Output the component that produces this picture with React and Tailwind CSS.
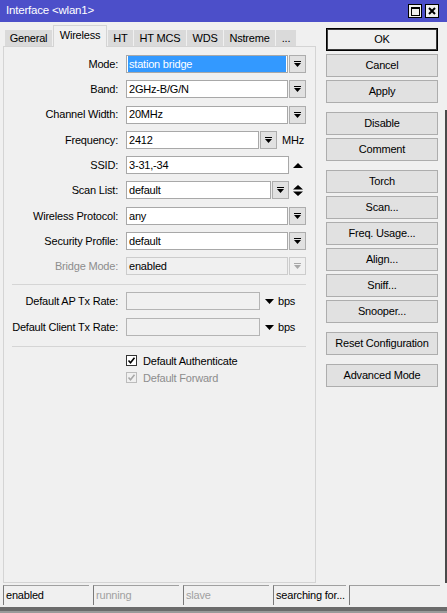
import React from "react";

const DropIcon = ({ color = "#000" }) => (
  <svg width="7" height="6" viewBox="0 0 7 6" fill={color}>
    <rect x="0" y="0" width="7" height="1" />
    <path d="M0 2h7L3.5 6z" />
  </svg>
);

const DropButton = ({ disabled }) => (
  <div
    className={
      disabled
        ? "ml-[1px] w-[17px] h-[18px] flex items-center justify-center border border-[#cccccc] bg-[#f0f0f0]"
        : "ml-[1px] w-[17px] h-[18px] flex items-center justify-center border border-[#adadad] bg-[#e1e1e1]"
    }
  >
    <DropIcon color={disabled ? "#a8a8a8" : "#000"} />
  </div>
);

const Field = ({ value, w, selected, disabled, empty }) => {
  let cls =
    "h-[18px] flex items-center px-[1px] border border-[#a8a8a8] bg-white whitespace-nowrap overflow-hidden";
  if (selected) cls = "h-[18px] flex items-center px-[1px] border border-[#a8a8a8] bg-white whitespace-nowrap overflow-hidden";
  if (disabled) cls = "h-[18px] flex items-center px-[1px] border border-[#cccccc] bg-[#f0f0f0] whitespace-nowrap overflow-hidden";
  if (empty) cls = "h-[18px] flex items-center px-[1px] border border-[#b4b4b4] bg-[#f0f0f0] whitespace-nowrap overflow-hidden";
  return (
    <div className={cls} style={{ width: w }}>
      {selected ? (
        <div className="h-full w-full bg-[#3399ff] text-white pl-[1px] flex items-center">{value}</div>
      ) : (
        <span className="pl-[1px]">{value}</span>
      )}
    </div>
  );
};

const Label = ({ children, muted }) => (
  <div className={muted ? "w-[114px] mr-[8px] text-right text-[#8d8d8d]" : "w-[114px] mr-[8px] text-right"}>
    {children}
  </div>
);

const Row = ({ children }) => <div className="flex items-center h-[18px]">{children}</div>;

const UpTri = () => (
  <svg width="10" height="5" viewBox="0 0 10 5" className="ml-[4px]">
    <path d="M0 5L5 0L10 5z" fill="#000" />
  </svg>
);

const UpDown = () => (
  <svg width="10" height="11" viewBox="0 0 10 11" className="ml-[4px]">
    <path d="M0 4.5L5 0L10 4.5z M0 6.5L5 11L10 6.5z" fill="#000" />
  </svg>
);

const DownTri = () => (
  <svg width="9" height="5" viewBox="0 0 9 5" className="ml-[5px]">
    <path d="M0 0L9 0L4.5 5z" fill="#000" />
  </svg>
);

const Check = ({ muted }) => (
  <div
    className={
      muted
        ? "w-[11px] h-[11px] border border-[#bcbcbc] bg-[#f0f0f0] flex items-center justify-center"
        : "w-[11px] h-[11px] border border-[#333333] bg-white flex items-center justify-center"
    }
  >
    <svg width="9" height="9" viewBox="0 0 9 9">
      <path d="M1.5 4.5l2 2.2 4-5" stroke={muted ? "#a8a8a8" : "#000"} strokeWidth="1.6" fill="none" />
    </svg>
  </div>
);

const Btn = ({ children, primary }) => (
  <div
    className={
      primary
        ? "h-[23px] flex items-center justify-center border border-black shadow-[inset_0_0_0_1px_#3c3c3c] bg-[#f0f0f0]"
        : "h-[23px] flex items-center justify-center border border-[#adadad] bg-[#e1e1e1]"
    }
  >
    {children}
  </div>
);

const tabs = [
  { name: "General", w: 47 },
  { name: "Wireless", w: 54, active: true },
  { name: "HT", w: 25 },
  { name: "HT MCS", w: 52 },
  { name: "WDS", w: 36 },
  { name: "Nstreme", w: 51 },
  { name: "...", w: 20 },
];

const cells = [
  { t: "enabled", w: 86 },
  { t: "running", w: 86, muted: true },
  { t: "slave", w: 86, muted: true },
  { t: "searching for...", w: 73 },
  { t: "", w: 91 },
];

export default function App() {
  return (
    <div className="w-[447px] h-[613px] flex flex-col bg-[#f0f0f0] text-black text-[11px] tracking-[-0.2px] font-['Liberation_Sans',Arial,sans-serif] overflow-hidden">
      {/* title bar */}
      <div className="h-[22px] shrink-0 bg-[#4c4fc9] flex items-center pl-[6px] pr-[8px] text-white text-[11.5px]">
        <span>Interface &lt;wlan1&gt;</span>
        <div className="ml-auto flex gap-[3px]">
          <div className="w-[14px] h-[14px] bg-[#f0f0f0] border border-black flex items-center justify-center">
            <div className="w-[9px] h-[9px] border border-black border-t-2" />
          </div>
          <div className="w-[14px] h-[14px] bg-[#f0f0f0] border border-black flex items-center justify-center">
            <svg width="8" height="8" viewBox="0 0 8 8">
              <path d="M1 1L7 7M7 1L1 7" stroke="#000" strokeWidth="2" />
            </svg>
          </div>
        </div>
      </div>

      <div className="h-[561px] shrink-0 flex">
        {/* left column */}
        <div className="ml-[3px] w-[313px] flex flex-col">
          <div className="h-[24px] flex items-end pl-[2px] gap-[1px]">
            {tabs.map((t) =>
              t.active ? (
                <div
                  key={t.name}
                  className="h-[22px] -mb-[1px] relative z-10 bg-[#f0f0f0] border border-b-0 border-[#d4d4d4] flex items-center justify-center pb-[3px]"
                  style={{ width: t.w }}
                >
                  {t.name}
                </div>
              ) : (
                <div
                  key={t.name}
                  className="h-[16px] bg-[#dadada] flex items-center justify-center pt-[1px]"
                  style={{ width: t.w }}
                >
                  {t.name}
                </div>
              )
            )}
          </div>
          <div className="flex-1 border border-[#d4d4d4] pt-[8px] flex flex-col">
            <div className="flex flex-col gap-[7.3px]">
              <Row>
                <Label>Mode:</Label>
                <Field value="station bridge" w={162} selected />
                <DropButton />
              </Row>
              <Row>
                <Label>Band:</Label>
                <Field value="2GHz-B/G/N" w={162} />
                <DropButton />
              </Row>
              <Row>
                <Label>Channel Width:</Label>
                <Field value="20MHz" w={162} />
                <DropButton />
              </Row>
              <Row>
                <Label>Frequency:</Label>
                <Field value="2412" w={133} />
                <DropButton />
                <span className="ml-[5px]">MHz</span>
              </Row>
              <Row>
                <Label>SSID:</Label>
                <Field value="3-31,-34" w={163} />
                <UpTri />
              </Row>
              <Row>
                <Label>Scan List:</Label>
                <Field value="default" w={145} />
                <DropButton />
                <UpDown />
              </Row>
              <Row>
                <Label>Wireless Protocol:</Label>
                <Field value="any" w={162} />
                <DropButton />
              </Row>
              <Row>
                <Label>Security Profile:</Label>
                <Field value="default" w={162} />
                <DropButton />
              </Row>
              <Row>
                <Label muted>Bridge Mode:</Label>
                <Field value="enabled" w={162} disabled />
                <DropButton disabled />
              </Row>
            </div>

            <div className="ml-[8px] w-[294px] h-px bg-[#d5d5d5] mt-[9px]" />

            <div className="flex flex-col gap-[8px] mt-[7px]">
              <Row>
                <Label>Default AP Tx Rate:</Label>
                <Field value="" w={134} empty />
                <DownTri />
                <span className="ml-[4px]">bps</span>
              </Row>
              <Row>
                <Label>Default Client Tx Rate:</Label>
                <Field value="" w={134} empty />
                <DownTri />
                <span className="ml-[4px]">bps</span>
              </Row>
            </div>

            <div className="ml-[8px] w-[294px] h-px bg-[#d5d5d5] mt-[10px]" />

            <div className="flex flex-col gap-[2px] mt-[6px] pl-[122px]">
              <div className="flex items-center h-[15px]">
                <Check />
                <span className="ml-[6px]">Default Authenticate</span>
              </div>
              <div className="flex items-center h-[15px]">
                <Check muted />
                <span className="ml-[6px] text-[#8d8d8d]">Default Forward</span>
              </div>
            </div>
          </div>
        </div>

        {/* right column */}
        <div className="ml-[10px] w-[112px] pt-[6px] flex flex-col">
          <div className="flex flex-col gap-[3px]">
            <Btn primary>OK</Btn>
            <Btn>Cancel</Btn>
            <Btn>Apply</Btn>
          </div>
          <div className="flex flex-col gap-[3px] mt-[9px]">
            <Btn>Disable</Btn>
            <Btn>Comment</Btn>
          </div>
          <div className="flex flex-col gap-[3px] mt-[9px]">
            <Btn>Torch</Btn>
            <Btn>Scan...</Btn>
            <Btn>Freq. Usage...</Btn>
            <Btn>Align...</Btn>
            <Btn>Sniff...</Btn>
            <Btn>Snooper...</Btn>
          </div>
          <div className="mt-[9px]">
            <Btn>Reset Configuration</Btn>
          </div>
          <div className="mt-[9px]">
            <Btn>Advanced Mode</Btn>
          </div>
        </div>

        <div className="ml-auto w-[2px] mt-[88px] bg-[#4a4a4a]" />
      </div>

      {/* status bar */}
      <div className="h-[20px] shrink-0 mt-[2px] flex pl-[3px]">
        {cells.map((c, i) => (
          <div
            key={i}
            className={
              c.muted
                ? "h-full border-t border-l border-t-[#a0a0a0] border-l-[#7a7a7a] flex items-center pl-[2px] text-[#a0a0a0] mr-[4px]"
                : "h-full border-t border-l border-t-[#a0a0a0] border-l-[#7a7a7a] flex items-center pl-[2px] mr-[4px]"
            }
            style={{ width: c.w, marginRight: i === 3 ? 3 : 4 }}
          >
            {c.t}
          </div>
        ))}
      </div>
      <div className="h-[2px] shrink-0" />
      <div className="h-[4px] shrink-0 bg-[#6b6b6b]" />
      <div className="h-[2px] shrink-0 bg-[#9a9a9a]" />
    </div>
  );
}
